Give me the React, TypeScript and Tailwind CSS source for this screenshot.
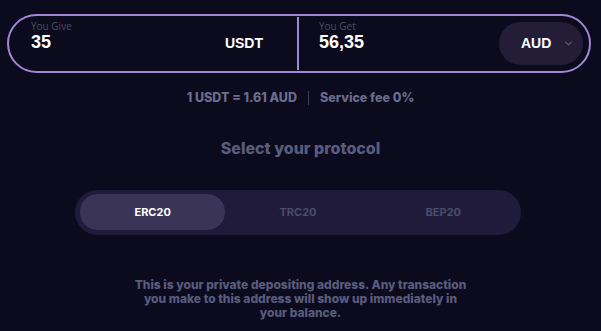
import { ChevronDown } from "lucide-react";

const TABS = ["ERC20", "TRC20", "BEP20"];

export default function App() {
  return (
    <div
      className="h-[331px] w-[601px] overflow-hidden bg-[#0c0a1d] pt-[14px]"
      style={{ fontFamily: "Inter, Lato, sans-serif" }}
    >
      {/* exchange box */}
      <div className="mx-[7px] flex h-[59px] w-[584px] items-center rounded-full border-2 border-[#a088d6]">
        <div className="flex h-full w-[288px] shrink-0 items-center pl-[22px] pr-[34px]">
          <div className="mb-[16px] flex-1">
            <div className="text-[10px] leading-[12px] text-[#4b4d68]" style={{ fontFamily: "'Open Sans', sans-serif" }}>
              You Give
            </div>
            <div className="mt-[1px] text-[18px] font-bold leading-[18px] text-white" style={{ fontFamily: "'Liberation Sans', Arial, sans-serif" }}>
              35
            </div>
          </div>
          <span className="text-[14px] font-bold text-white" style={{ fontFamily: "'Liberation Sans', Arial, sans-serif" }}>
            USDT
          </span>
        </div>
        <div className="h-[53px] w-[2px] shrink-0 bg-[#a088d6]" />
        <div className="flex h-full min-w-0 flex-1 items-center pl-[20px] pr-[6px]">
          <div className="mb-[16px] flex-1">
            <div className="text-[10px] leading-[12px] text-[#4b4d68]" style={{ fontFamily: "'Open Sans', sans-serif" }}>
              You Get
            </div>
            <div className="mt-[1px] text-[18px] font-bold leading-[18px] text-white" style={{ fontFamily: "'Liberation Sans', Arial, sans-serif" }}>
              56,35
            </div>
          </div>
          <div className="flex h-[43px] w-[84px] items-center rounded-full bg-[#231d38] pl-[22px]">
            <span className="text-[14px] font-bold text-white" style={{ fontFamily: "'Liberation Sans', Arial, sans-serif" }}>
              AUD
            </span>
            <ChevronDown className="ml-[12px] h-[11px] w-[11px] text-[#5b5775]" strokeWidth={3} />
          </div>
        </div>
      </div>

      {/* rate */}
      <div className="mt-[16px] flex items-center justify-center text-[12.5px] font-extrabold text-[#6a6e8c]">
        <span>1 USDT = 1.61 AUD</span>
        <span className="mx-[11px] h-[14px] w-px bg-[#3d3d58]" />
        <span>Service fee 0%</span>
      </div>

      <div className="mt-[28px] text-center text-[16px] font-extrabold text-[#585d7e]">
        Select your protocol
      </div>

      {/* protocol tabs */}
      <div className="ml-[75px] mt-[30px] flex h-[45px] w-[446px] items-center rounded-full bg-[#211b3b] px-[5px]">
        {TABS.map((t, i) => (
          <div
            key={t}
            className={`flex h-[36px] flex-1 items-center justify-center rounded-full text-[11px] font-bold ${
              i === 0 ? "bg-[#3b3459] text-white" : "text-[#4a4c6b]"
            }`}
          >
            {t}
          </div>
        ))}
      </div>

      <p className="mx-auto mt-[43px] w-[360px] text-center text-[12px] font-extrabold leading-[14px] text-[#585c7d]">
        This is your private depositing address. Any transaction
        <br />
        you make to this address will show up immediately in
        <br />
        your balance.
      </p>
    </div>
  );
}
